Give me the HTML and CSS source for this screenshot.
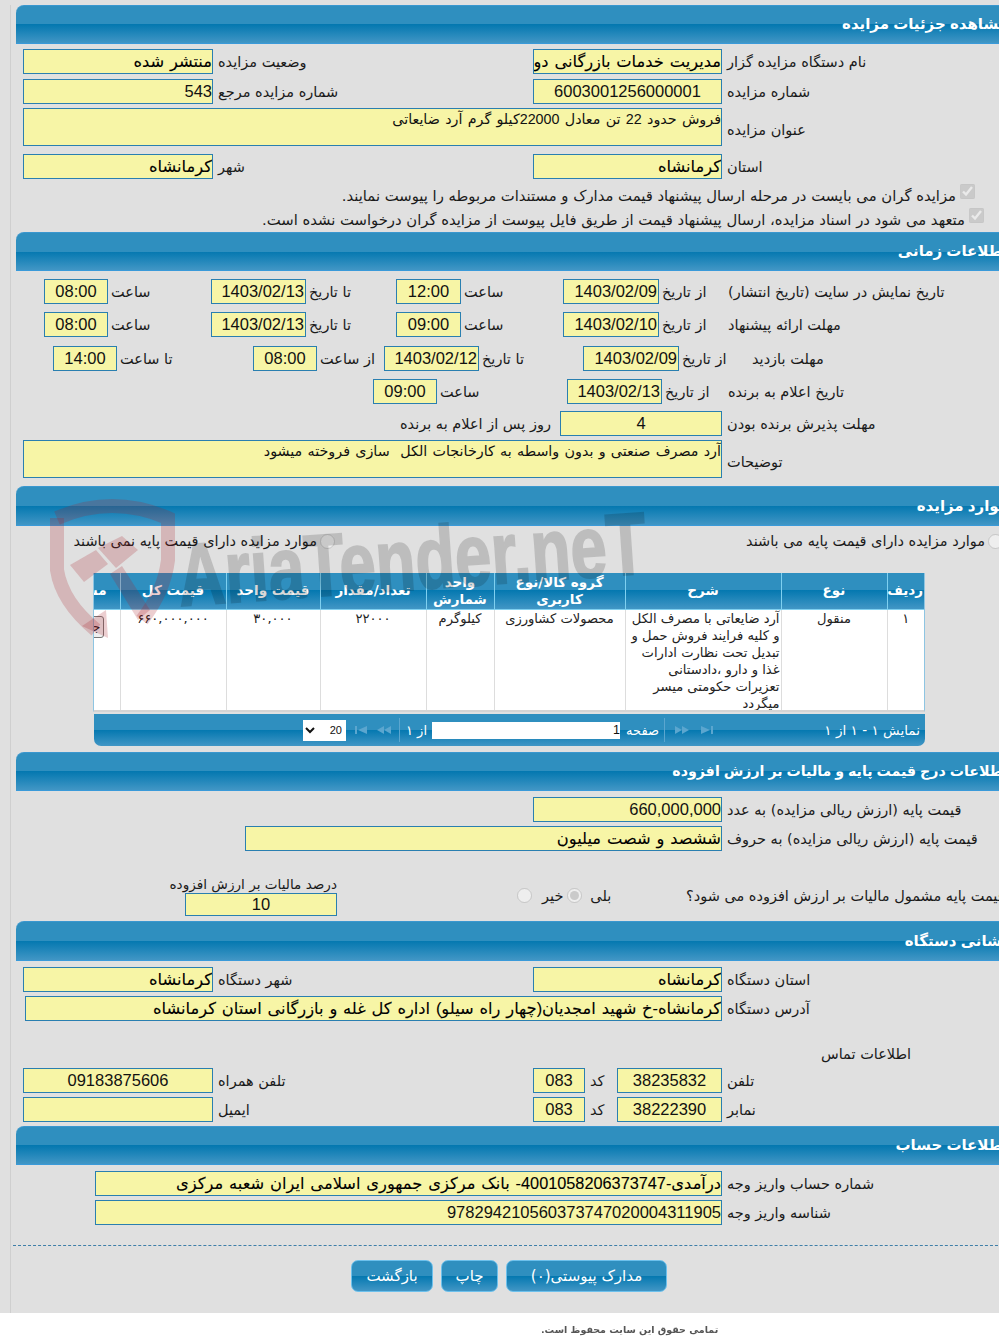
FILE: index.html
```html
<!DOCTYPE html>
<html lang="fa">
<head>
<meta charset="utf-8">
<title>مشاهده جزئیات مزایده</title>
<link rel="stylesheet" href="styles.css">
</head>
<body>
<main class="panel">
<div class="inner">

<section>
  <h2 class="bar">مشاهده جزئیات مزایده</h2>
  <div class="row r2 mt5 h25">
    <div class="cell"><div class="field w190 val">منتشر شده</div><span class="lbl">وضعیت مزایده</span></div>
    <div class="cell"><div class="field w189 val">مدیریت خدمات بازرگانی دولت</div><span class="lbl">نام دستگاه مزایده گزار</span></div>
  </div>
  <div class="row r2 mt5 h24">
    <div class="cell"><div class="field w190 num">543</div><span class="lbl">شماره مزایده مرجع</span></div>
    <div class="cell"><div class="field w189 num center">6003001256000001</div><span class="lbl">شماره مزایده</span></div>
  </div>
  <div class="row r1 mt5 h38">
    <div class="cell"><div class="field w699 area">فروش حدود 22 تن معادل 22000کیلو گرم آرد ضایعاتی</div><span class="lbl">عنوان مزایده</span></div>
  </div>
  <div class="row r2 mt8 h25">
    <div class="cell"><div class="field w190 val">کرمانشاه</div><span class="lbl">شهر</span></div>
    <div class="cell"><div class="field w189 val">کرمانشاه</div><span class="lbl">استان</span></div>
  </div>
  <div class="check c1 mt4"><input type="checkbox" checked disabled><span>مزایده گران می بایست در مرحله ارسال پیشنهاد قیمت مدارک و مستندات مربوطه را پیوست نمایند.</span></div>
  <div class="check c2"><input type="checkbox" checked disabled><span>متعهد می شود در اسناد مزایده، ارسال پیشنهاد قیمت از طریق فایل پیوست از مزایده گران درخواست نشده است.</span></div>
</section>

<section class="mt1">
  <h2 class="bar">اطلاعات زمانی</h2>
  <div class="row t1 mt8 h24">
    <div class="cell g3"><div class="field w64 num center">08:00</div><span class="lbl">ساعت</span></div>
    <div class="cell g3"><div class="field w95 num end">1403/02/13</div><span class="lbl">تا تاریخ</span></div>
    <div class="cell g3"><div class="field w65 num center">12:00</div><span class="lbl">ساعت</span></div>
    <div class="cell g3"><div class="field w96 num end">1403/02/09</div><span class="lbl">از تاریخ</span></div>
    <div class="cell"><span class="lbl">تاریخ نمایش در سایت (تاریخ انتشار)</span></div>
  </div>
  <div class="row t1 mt9 h25">
    <div class="cell g3"><div class="field w64 num center">08:00</div><span class="lbl">ساعت</span></div>
    <div class="cell g3"><div class="field w95 num end">1403/02/13</div><span class="lbl">تا تاریخ</span></div>
    <div class="cell g3"><div class="field w65 num center">09:00</div><span class="lbl">ساعت</span></div>
    <div class="cell g3"><div class="field w96 num end">1403/02/10</div><span class="lbl">از تاریخ</span></div>
    <div class="cell"><span class="lbl">مهلت ارائه پیشنهاد</span></div>
  </div>
  <div class="row t3 mt9 h24">
    <div class="cell g3"><div class="field w64 num center">14:00</div><span class="lbl">تا ساعت</span></div>
    <div class="cell g3"><div class="field w64 num center">08:00</div><span class="lbl">از ساعت</span></div>
    <div class="cell g3"><div class="field w95 num end">1403/02/12</div><span class="lbl">تا تاریخ</span></div>
    <div class="cell g3"><div class="field w96 num end">1403/02/09</div><span class="lbl">از تاریخ</span></div>
    <div class="cell"><span class="lbl">مهلت بازدید</span></div>
  </div>
  <div class="row t4 mt9 h25">
    <div class="cell g3"><div class="field w64 num center">09:00</div><span class="lbl">ساعت</span></div>
    <div class="cell g3"><div class="field w95 num end">1403/02/13</div><span class="lbl">از تاریخ</span></div>
    <div class="cell"><span class="lbl">تاریخ اعلام به برنده</span></div>
  </div>
  <div class="row t5 mt7 h24">
    <div class="cell end-cell"><span class="lbl">روز پس از اعلام به برنده</span></div>
    <div class="cell"><div class="field w162 num center">4</div><span class="lbl">مهلت پذیرش برنده بودن</span></div>
  </div>
  <div class="row r1 mt5 h38">
    <div class="cell"><div class="field w699 area">آرد مصرف صنعتی و بدون واسطه به کارخانجات الکل&nbsp; سازی فروخته میشود</div><span class="lbl">توضیحات</span></div>
  </div>
</section>

<section class="mt8">
  <h2 class="bar tall">موارد مزایده</h2>
  <div class="row radios mt3 h24">
    <div class="cell rtl"><input type="radio" disabled><span class="lbl">موارد مزایده دارای قیمت پایه نمی باشند</span></div>
    <div></div>
    <div class="cell rtl"><input type="radio" disabled><span class="lbl">موارد مزایده دارای قیمت پایه می باشند</span></div>
  </div>
  <div class="grid mt20">
    <table>
      <colgroup><col class="c-more"><col class="c-total"><col class="c-unit"><col class="c-qty"><col class="c-measure"><col class="c-group"><col class="c-desc"><col class="c-type"><col class="c-idx"></colgroup>
      <thead>
        <tr><th class="more">مشاهده</th><th>قیمت کل</th><th>قیمت واحد</th><th>تعداد/مقدار</th><th>واحد شمارش</th><th>گروه کالا/نوع کاربری</th><th>شرح</th><th>نوع</th><th>ردیف</th></tr>
      </thead>
      <tbody>
        <tr>
          <td class="more"><button class="mini" type="button">جزئیات</button></td>
          <td>۶۶۰,۰۰۰,۰۰۰</td><td>۳۰,۰۰۰</td><td>۲۲۰۰۰</td><td>کیلوگرم</td><td>محصولات کشاورزی</td>
          <td class="desc">آرد ضایعاتی با مصرف الکل و کلیه فرایند فروش حمل و تبدیل تحت نظارت ادارات غذا و دارو ،دادستانی تعزیرات حکومتی میسر میگردد</td>
          <td>منقول</td><td>۱</td>
        </tr>
      </tbody>
    </table>
  </div>
  <div class="pager">
    <select disabled><option>20</option></select>
    <svg class="pg first" width="14" height="10" viewBox="0 0 14 10"><path d="M1 1h2v8H1zM13 1v8L4 5z"/></svg>
    <svg class="pg prev" width="16" height="10" viewBox="0 0 16 10"><path d="M8 1v8L1 5zM15 1v8L8 5z"/></svg>
    <i class="sep"></i>
    <span class="pg-text of">از ۱</span>
    <div class="pg-input">1</div>
    <span class="pg-text">صفحه</span>
    <i class="sep s2"></i>
    <svg class="pg next" width="16" height="10" viewBox="0 0 16 10"><path d="M1 1v8l7-4zM8 1v8l7-4z"/></svg>
    <svg class="pg last" width="14" height="10" viewBox="0 0 14 10"><path d="M1 1v8l9-4zM11 1h2v8h-2z"/></svg>
    <span class="pg-text info">نمایش ۱ - ۱ از ۱</span>
  </div>
</section>

<section class="mt6">
  <h2 class="bar long">اطلاعات درج قیمت پایه و مالیات بر ارزش افزوده</h2>
  <div class="row r1 mt6 h24 pl-a">
    <div class="cell"><div class="field w189 num">660,000,000</div><span class="lbl">قیمت پایه (ارزش ریالی مزایده) به عدد</span></div>
  </div>
  <div class="row r1 mt5 h24 pl-b">
    <div class="cell"><div class="field w477 val">ششصد و شصت میلیون</div><span class="lbl">قیمت پایه (ارزش ریالی مزایده) به حروف</span></div>
  </div>
  <div class="row vat">
    <div class="vat-col">
      <span class="lbl">درصد مالیات بر ارزش افزوده</span>
      <div class="field w152 num center">10</div>
    </div>
    <div></div>
    <div class="cell rtl yesno">
      <span class="lbl yes">بلی</span><input type="radio" checked disabled>
      <span class="lbl no">خیر</span><input type="radio" disabled>
    </div>
    <div class="cell"><span class="lbl">قیمت پایه مشمول مالیات بر ارزش افزوده می شود؟</span></div>
  </div>
</section>

<section class="mt5">
  <h2 class="bar tall">نشانی دستگاه</h2>
  <div class="row r2 mt6 h24">
    <div class="cell"><div class="field w190 val">کرمانشاه</div><span class="lbl">شهر دستگاه</span></div>
    <div class="cell"><div class="field w189 val">کرمانشاه</div><span class="lbl">استان دستگاه</span></div>
  </div>
  <div class="row r1 mt5 h24 pl-c">
    <div class="cell"><div class="field w697 val">کرمانشاه-خ شهید امجدیان(چهار راه سیلو) اداره کل غله و بازرگانی استان کرمانشاه</div><span class="lbl">آدرس دستگاه</span></div>
  </div>
  <div class="contact"><span class="lbl">اطلاعات تماس</span></div>
  <div class="row r3 h24 mt2">
    <div class="cell"><div class="field w190 num center">09183875606</div><span class="lbl">تلفن همراه</span></div>
    <div class="cell"><div class="field w52 num center">083</div><span class="lbl">کد</span></div>
    <div class="cell"><div class="field w105 num center">38235832</div><span class="lbl">تلفن</span></div>
  </div>
  <div class="row r3 h24 mt5">
    <div class="cell"><div class="field w190 num"></div><span class="lbl">ایمیل</span></div>
    <div class="cell"><div class="field w52 num center">083</div><span class="lbl">کد</span></div>
    <div class="cell"><div class="field w105 num center">38222390</div><span class="lbl">نمابر</span></div>
  </div>
</section>

<section class="mt5">
  <h2 class="bar">اطلاعات حساب</h2>
  <div class="row r1 mt6 h24 pl-d">
    <div class="cell"><div class="field w627 val">درآمدی-4001058206373747- بانک مرکزی جمهوری اسلامی ایران شعبه مرکزی</div><span class="lbl">شماره حساب واریز وجه</span></div>
  </div>
  <div class="row r1 mt5 h24 pl-d">
    <div class="cell"><div class="field w627 num">978294210560373747020004311905</div><span class="lbl">شناسه واریز وجه</span></div>
  </div>
</section>

<div class="actions-wrap">
  <div class="actions">
    <button class="btn b-back" type="button">بازگشت</button>
    <button class="btn b-print" type="button">چاپ</button>
    <button class="btn b-docs" type="button">مدارک پیوستی(۰)</button>
  </div>
</div>

</div>
</main>

<footer class="foot">تمامی حقوق این سایت محفوظ است.</footer>

<div class="mark" aria-hidden="true">
  <svg class="shield" width="130" height="150" viewBox="0 0 130 150">
    <path class="sh" d="M7 20 Q62 -4 118 20 L118 62 Q114 94 92 122"/>
    <path class="sh" d="M7 20 L7 72 Q12 104 46 132"/>
    <path class="gv" d="M58 140 L32 128 L56 112 Z"/>
    <path class="gv" d="M20 67 L46 52 L58 66 L34 84 Z"/>
    <path class="gv" d="M48 50 L72 38 L88 52 L66 70 Z"/>
    <path class="gv" d="M60 76 L72 68 L100 112 L88 122 Z"/>
  </svg>
  <span class="word">AriaTender.neT</span>
</div>
</body>
</html>
```
FILE: styles.css
```css
html, body { margin: 0; padding: 0; overflow: hidden; background: #fff; height: 1336px; }
body { position: relative; width: 999px; font-family: "Liberation Sans", "DejaVu Sans", sans-serif; font-size: 14px; color: #1a1a1a; }
* { box-sizing: border-box; }

.panel { background: #e0e0e0; height: 1313px; padding: 5px 0 0 10px; overflow: hidden; }
.inner { border-left: 1px solid #cfcfcf; padding-left: 5px; height: 100%; width: 1010px; }
section { width: 996px; }

.bar {
  margin: 0; height: 39px; direction: rtl; color: #fff; font-size: 15px; font-weight: bold; line-height: 36px;
  padding-right: 4px; border-top: 1px solid #3a97cf; border-bottom: 1px solid #3a9ad9;
  border-top-left-radius: 8px; white-space: nowrap;
  background: linear-gradient(to bottom, #2f8fbf 0%, #2f8fbf 50%, #0478b0 50%, #4196c5 100%);
}
.bar.tall { height: 40px; line-height: 38px; }
.bar.long { font-size: 14.2px; }

.row { display: grid; align-items: stretch; padding-left: 7px; }
.r1 { grid-template-columns: 1fr; }
.r2 { grid-template-columns: 510px 1fr; }
.r3 { grid-template-columns: 510px 84px 1fr; }
.t1 { grid-template-columns: 167px 185px 167px 165px 300px; padding-left: 28px; }
.t3 { grid-template-columns: 200px 131px 199px 169px 240px; padding-left: 37px; }
.t4 { grid-template-columns: 194px 161px 280px; padding-left: 357px; }
.t5 { grid-template-columns: 528px 400px; padding-left: 16px; }
.radios { grid-template-columns: 265px 407px 261px; padding-left: 54px; }
.pl-a { padding-left: 517px; }
.pl-b { padding-left: 229px; }
.pl-c { padding-left: 9px; }
.pl-d { padding-left: 79px; }

.cell { display: flex; align-items: center; gap: 5px; direction: ltr; white-space: nowrap; min-width: 0; }
.g3 { gap: 3px; }
.rtl { direction: rtl; gap: 3px; }
.end-cell { justify-content: flex-end; padding-right: 9px; }
.lbl { direction: rtl; white-space: nowrap; font-family: "DejaVu Sans", sans-serif; font-size: 14.5px; line-height: 18px; }
.area + .lbl { margin-top: 6px; }

.field {
  height: 100%; background: #f7f5a6; border: 1px solid #2a7fb0; direction: rtl; overflow: hidden; white-space: nowrap;
  color: #111; flex: none; font-size: 17px; line-height: 23px; text-align: right;
}
.val { font-family: "Liberation Sans", "DejaVu Sans", sans-serif; font-size: 16.3px; word-spacing: 1.3px; color: #000; -webkit-text-stroke: .1px #000; }
.num { font-family: "Liberation Sans", sans-serif; font-size: 16.5px; direction: ltr; text-align: right; }
.center { text-align: center; }
.end { text-align: right; padding-right: 1px; }
.area { font-family: "Liberation Sans", "DejaVu Sans", sans-serif; font-size: 14.3px; word-spacing: 1.3px; line-height: 18px; white-space: normal; padding-top: 1px; }

.w52 { width: 52px; } .w64 { width: 64px; } .w65 { width: 65px; } .w95 { width: 95px; } .w96 { width: 96px; }
.w105 { width: 105px; } .w152 { width: 152px; } .w162 { width: 162px; } .w189 { width: 189px; } .w190 { width: 190px; }
.w477 { width: 477px; } .w627 { width: 627px; } .w697 { width: 697px; } .w699 { width: 699px; }

.h24 { height: 24px; } .h25 { height: 25px; } .h38 { height: 38px; }
.mt1 { margin-top: 1px; } .mt2 { margin-top: 2px; } .mt3 { margin-top: 3px; } .mt4 { margin-top: 4px; } .mt5 { margin-top: 5px; }
.mt6 { margin-top: 6px; } .mt7 { margin-top: 7px; } .mt8 { margin-top: 8px; } .mt9 { margin-top: 9px; } .mt20 { margin-top: 20px; }

.check { display: flex; align-items: center; direction: rtl; height: 24px; gap: 4px; font-family: "DejaVu Sans", sans-serif; font-size: 14.8px; white-space: nowrap; }
.check input, .cell input { margin: 0; flex: none; width: 15px; height: 15px; }
.check input { position: relative; top: -4px; }
.c1 { padding-right: 37px; }
.c2 { padding-right: 28px; }

.grid { margin-left: 77px; width: 832px; border: 1px solid #8ec5e2; border-top: 0; border-bottom: 2px solid #d4d4d4; background: #fff; overflow: hidden; height: 139px; }
table { table-layout: fixed; width: 830px; border-collapse: collapse; direction: ltr; font-family: "DejaVu Sans", sans-serif; }
.c-more { width: 26px; } .c-total { width: 106px; } .c-unit { width: 94px; } .c-qty { width: 106px; } .c-measure { width: 68px; }
.c-group { width: 131px; } .c-desc { width: 156px; } .c-type { width: 106px; } .c-idx { width: 37px; }
thead tr { height: 36px; background: linear-gradient(to bottom, #2f8fbf 0%, #2f8fbf 48%, #0478b0 48%, #4196c5 100%); }
th { direction: rtl; color: #fff; font-size: 13.5px; line-height: 17px; font-weight: bold; padding: 0 2px; border-right: 1px solid #7fd0f0; border-bottom: 1px solid #7fd0f0; overflow: hidden; }
th:last-child, td:last-child { border-right: 0; }
tbody tr { height: 102px; }
td { direction: rtl; border-right: 1px solid #ddd; vertical-align: top; text-align: center; font-size: 13.1px; line-height: 17px; padding: 0 1px; color: #222; overflow: hidden; }
th.more { white-space: nowrap; text-align: right; padding: 0 13px 0 0; }
td.more { white-space: nowrap; text-align: right; padding: 6px 16px 0 0; }
.desc { text-align: right; }
.mini { font: 12px "DejaVu Sans", sans-serif; height: 22px; width: 50px; padding: 0 2px; background: #efefef; border: 1px solid #777; border-radius: 3px; text-align: right; color: #111; display: block; }

.pager {
  display: flex; align-items: center; height: 32px; margin: 2px 0 0 78px; width: 831px; padding-left: 209px; color: #fff;
  border-radius: 0 0 7px 7px; background: linear-gradient(to bottom, #2f8fbf 0%, #2f8fbf 50%, #0478b0 50%, #4196c5 100%);
}
.pager select { width: 43px; height: 21px; border: 0; background: #fff; color: #111; direction: rtl; opacity: 1; font: 11px "Liberation Sans", sans-serif; padding: 0; flex: none; }
.pg { fill: #5ba6cf; flex: none; }
.first { margin-left: 8px; }
.prev { margin-left: 8px; }
.sep { width: 1px; height: 24px; background: #5ba6cf; margin-left: 7px; flex: none; }
.pg-text { font-family: "DejaVu Sans", sans-serif; font-size: 13px; direction: rtl; white-space: nowrap; flex: none; }
.of { margin-left: 6px; }
.pg-input { width: 188px; height: 17px; background: #fff; color: #111; margin-left: 5px; text-align: right; font-size: 12.5px; line-height: 17px; flex: none; }
.pg-input + .pg-text { margin-left: 6px; }
.s2 { margin-left: 5px; }
.next { margin-left: 9px; }
.last { margin-left: 10px; }
.info { margin-left: auto; margin-right: 5px; font-size: 13.6px; }

.vat { grid-template-columns: 168px 180px 169px 400px; padding-left: 153px; height: 66px; }
.vat-col { display: flex; flex-direction: column; align-items: flex-end; justify-content: flex-end; }
.vat-col .field { height: 23px; line-height: 21px; }
.vat-col .lbl { font-size: 13.6px; }
.vat .cell { align-self: end; height: 23px; margin-bottom: 9px; }
.yesno { gap: 0; justify-content: flex-end; }
.yes { margin-left: 8px; }
.no { margin: 0 4px 0 10px; }

.contact { padding-left: 805px; height: 24px; margin-top: 22px; line-height: 24px; }
.contact .lbl { display: inline-block; }

.actions-wrap { margin-top: 21px; border-top: 1px dashed #3f7fa8; margin-left: -3px; width: 1000px; }
.actions { display: flex; gap: 8px; padding: 14px 0 0 338px; }
.btn {
  height: 32px; padding: 0; border: 1px solid #6cc0ec; border-radius: 7px; color: #fff; font: 15px "DejaVu Sans", sans-serif; direction: rtl;
  background: linear-gradient(to bottom, #2f8fbf 0%, #2f8fbf 50%, #0478b0 50%, #4196c5 100%);
}
.b-back { width: 82px; }
.b-print { width: 57px; }
.b-docs { width: 161px; }

.foot { height: 23px; direction: rtl; font: bold 9.5px "DejaVu Sans", sans-serif; color: #555; padding: 11px 0 0 541px; text-align: left; white-space: nowrap; filter: blur(.4px); }

.mark { position: absolute; left: 50px; top: 498px; width: 620px; height: 150px; pointer-events: none; }
.shield { position: absolute; left: 0; top: 0; }
.sh { fill: none; stroke: rgba(170, 30, 40, .22); stroke-width: 14; }
.gv { fill: rgba(170, 30, 40, .22); }
.word { position: absolute; left: 128px; top: 28px; font: bold 88px/100px "Liberation Sans", sans-serif; color: #000; opacity: .15; -webkit-text-stroke: 2px #000; white-space: nowrap; transform-origin: 0 50%; transform: rotate(-4deg) scaleX(.74); }
```
